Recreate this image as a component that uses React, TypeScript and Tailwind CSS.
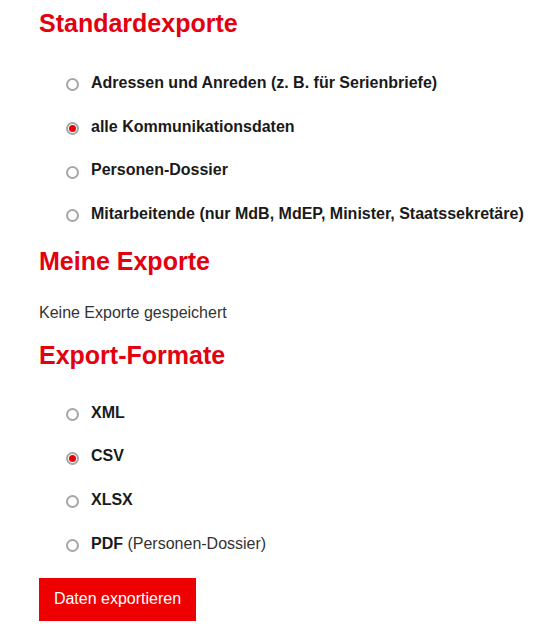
import { useState } from "react";

const standard = [
  "Adressen und Anreden (z. B. für Serienbriefe)",
  "alle Kommunikationsdaten",
  "Personen-Dossier",
  "Mitarbeitende (nur MdB, MdEP, Minister, Staatssekretäre)",
];

const formats: { label: string; note?: string }[] = [
  { label: "XML" },
  { label: "CSV" },
  { label: "XLSX" },
  { label: "PDF", note: "(Personen-Dossier)" },
];

function Radio({ checked }: { checked: boolean }) {
  return (
    <span className="mt-1 mr-[12px] flex h-[13px] w-[13px] shrink-0 items-center justify-center rounded-full border-2 border-[#a6a6a6] bg-white">
      {checked && <span className="h-[7px] w-[7px] rounded-full bg-[#e8000b]" />}
    </span>
  );
}

export default function App() {
  const [std, setStd] = useState(1);
  const [fmt, setFmt] = useState(1);

  return (
    <div className="min-h-screen bg-white pl-[39px] pt-[8px] text-[16px] text-[#222] [font-family:'Liberation_Sans',Arial,sans-serif]">
      <h2 className="text-[25px] leading-[30px] font-bold text-[#e3000f]">Standardexporte</h2>
      <ul className="mt-[23px] pl-[27px]">
        {standard.map((s, i) => (
          <li key={s} className="flex h-[43.7px] cursor-pointer items-center" onClick={() => setStd(i)}>
            <Radio checked={std === i} />
            <span className="leading-6 font-bold text-[#1a1a1a]">{s}</span>
          </li>
        ))}
      </ul>

      <h2 className="mt-[10px] text-[25px] leading-[30px] font-bold text-[#e3000f]">Meine Exporte</h2>
      <p className="mt-[25px] leading-6 text-[#333]">Keine Exporte gespeichert</p>

      <h2 className="mt-[15px] text-[25px] leading-[30px] font-bold text-[#e3000f]">Export-Formate</h2>
      <ul className="mt-[21px] pl-[27px]">
        {formats.map((f, i) => (
          <li key={f.label} className="flex h-[43.7px] cursor-pointer items-center" onClick={() => setFmt(i)}>
            <Radio checked={fmt === i} />
            <span className="leading-6 text-[#1a1a1a]">
              <b>{f.label}</b>
              {f.note && <span className="text-[#333]"> {f.note}</span>}
            </span>
          </li>
        ))}
      </ul>

      <button className="mt-[12px] h-[43px] w-[157px] bg-[#ee0000] text-[16px] text-white">
        Daten exportieren
      </button>
    </div>
  );
}
